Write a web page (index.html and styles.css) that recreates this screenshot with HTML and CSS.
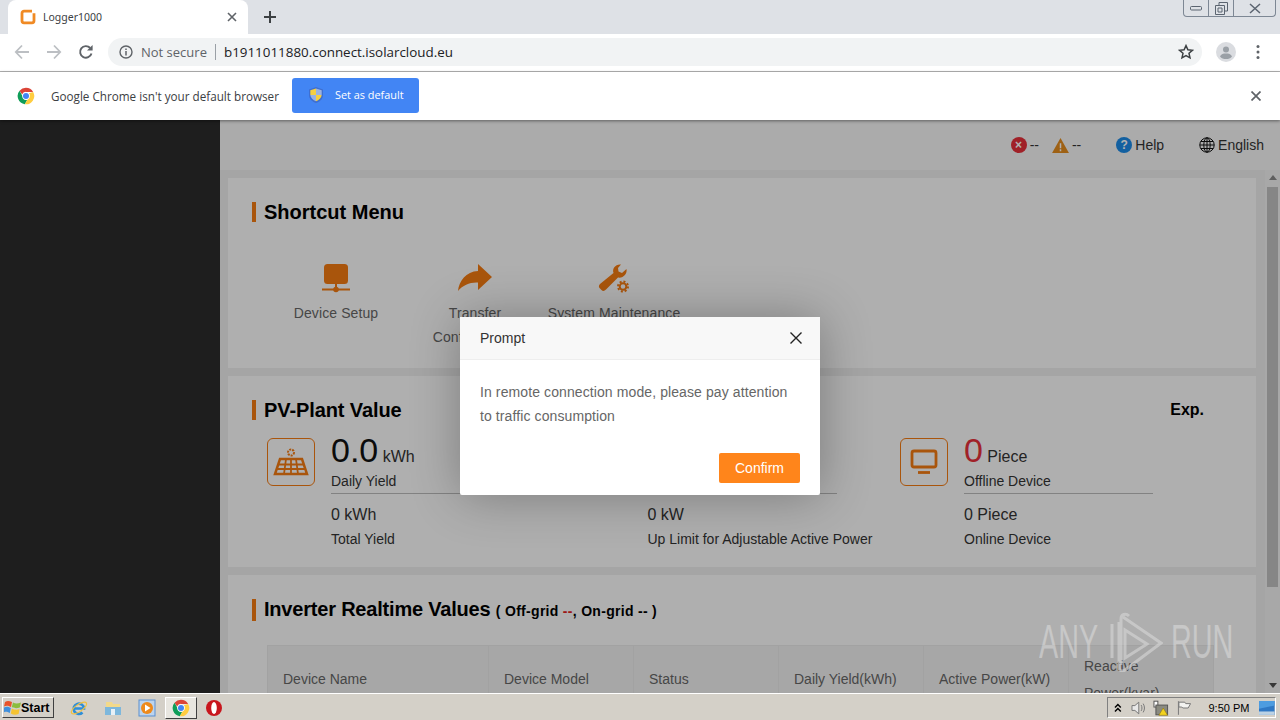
FILE: index.html
```html
<!DOCTYPE html>
<html lang="en">
<head>
    <meta charset="UTF-8">
    <meta name="viewport" content="width=device-width, initial-scale=1.0">
    <title>Logger1000</title>
    <link rel="stylesheet" href="styles.css">
</head>
<body>
    <svg class="defs" width="0" height="0">
        <symbol id="chrome-logo" viewBox="0 0 24 24">
            <path fill="#db4437" d="M12 1a11 11 0 0 1 9.5 5.5H12a5.5 5.5 0 0 0-5.2 3.6L3.4 5A11 11 0 0 1 12 1z"/>
            <path fill="#0f9d58" d="M3.4 5l4.2 7.6A5.5 5.5 0 0 0 13.500 17.300L10.400 22.900A11 11 0 0 1 3.400 5z"/>
            <path fill="#ffcd40" d="M21.500 6.500A11 11 0 0 1 10.400 22.900l4.300-7.500A5.500 5.500 0 0 0 15.800 8.200z"/>
            <circle cx="12" cy="12" r="5" fill="#fff"/>
            <circle cx="12" cy="12" r="4" fill="#4285f4"/>
        </symbol>
    </svg>

    <div class="tabstrip">
        <div class="tab">
            <svg class="favicon" viewBox="0 0 16 16"><path fill="none" stroke="#f08a24" stroke-width="2.800" d="M12 2.200H4A2 2 0 0 0 2 4.200v7.600a2 2 0 0 0 2 2h8a2 2 0 0 0 2-2V4.200"/></svg>
            <span class="tab-title">Logger1000</span>
            <svg class="tab-close" viewBox="0 0 10 10"><path stroke="#5f6368" stroke-width="1.600" d="M1 1l8 8M9 1l-8 8"/></svg>
        </div>
        <svg class="new-tab" viewBox="0 0 12 12"><path stroke="#3c4043" stroke-width="2" d="M6 0v12M0 6h12"/></svg>
        <div class="win-controls">
            <span class="win-btn"><svg width="12" height="6" viewBox="0 0 12 6"><rect x="0.500" y="1.500" width="11" height="3.500" rx="1" fill="none" stroke="#5b6470"/></svg></span>
            <span class="win-btn"><svg width="13" height="13" viewBox="0 0 13 13"><path fill="none" stroke="#5b6470" d="M4 3V.5h8.500V9H10M.5 3.500H9.500V12.500H.5zM3 6h4v4H3z"/></svg></span>
            <span class="win-btn win-close"><svg width="12" height="11" viewBox="0 0 12 11"><path fill="none" stroke="#5b6470" stroke-width="1.500" d="M1 1l10 9M11 1L1 10"/></svg></span>
        </div>
    </div>

    <div class="toolbar">
        <svg class="nav-icon" viewBox="0 0 16 16"><path fill="none" stroke="#bcbfc3" stroke-width="1.800" d="M15 8H2M8 1.500L1.800 8 8 14.500"/></svg>
        <svg class="nav-icon" viewBox="0 0 16 16"><path fill="none" stroke="#bcbfc3" stroke-width="1.800" d="M1 8h13M8 1.500L14.200 8 8 14.500"/></svg>
        <svg class="nav-icon" viewBox="0 0 16 16"><path fill="none" stroke="#5f6368" stroke-width="1.900" d="M13.500 9.500A5.800 5.800 0 1 1 12.200 4"/><path fill="#5f6368" d="M14.600 1v5.600H9z"/></svg>
        <div class="omnibox">
            <svg class="info-icon" viewBox="0 0 14 14"><circle cx="7" cy="7" r="6" fill="none" stroke="#5f6368" stroke-width="1.400"/><path stroke="#5f6368" stroke-width="1.500" d="M7 6v4.500M7 3.500v1.500"/></svg>
            <span class="not-secure">Not secure</span>
            <span class="omni-sep"></span>
            <span class="url">b1911011880.connect.isolarcloud.eu</span>
            <svg class="star" viewBox="0 0 16 16"><path fill="none" stroke="#3c4043" stroke-width="1.500" d="M8 1.600l1.900 4.200 4.500.5-3.400 3 1 4.500L8 11.500l-4 2.300 1-4.500-3.400-3 4.500-.5z"/></svg>
        </div>
        <svg class="avatar" viewBox="0 0 20 20"><circle cx="10" cy="10" r="10" fill="#dadce0"/><circle cx="10" cy="7.500" r="3" fill="#9aa0a6"/><path fill="#9aa0a6" d="M4 14.500c1-2.500 3.500-3 6-3s5 .5 6 3c-1.500 2-3.500 2.500-6 2.500s-4.500-.5-6-2.500z"/></svg>
        <svg class="menu-dots" viewBox="0 0 4 16"><circle cx="2" cy="2.500" r="1.500" fill="#5f6368"/><circle cx="2" cy="8" r="1.500" fill="#5f6368"/><circle cx="2" cy="13.500" r="1.500" fill="#5f6368"/></svg>
    </div>

    <div class="infobar">
        <svg class="info-logo"><use href="#chrome-logo"/></svg>
        <span class="info-text">Google Chrome isn't your default browser</span>
        <button class="default-btn">
            <svg class="shield" viewBox="0 0 14 16"><path fill="#3f6fd0" d="M7 0l7 2.500V8c0 4-3 6.500-7 8-4-1.500-7-4-7-8V2.500z"/><path fill="#f6cf3f" d="M7 1.500V8H1.300V3.300zM7 8h5.700c-.3 3-2.700 5-5.700 6.300z"/><path fill="#e6e9ef" d="M7 1.500l5.700 1.800V8H7zM7 8v6.300C4 13 1.600 11 1.300 8z" opacity=".55"/></svg>
            <span class="default-label">Set as default</span>
        </button>
        <svg class="info-close" viewBox="0 0 10 10"><path stroke="#5f6368" stroke-width="1.700" d="M.5.500l9 9M9.500.500l-9 9"/></svg>
    </div>

    <div class="page">
        <aside class="sidebar"></aside>
        <div class="main">
            <header class="topbar">
                <span class="status"><span class="dot dot-red">×</span><span class="dash">--</span></span>
                <span class="status status-warn">
                    <svg class="warn-icon" viewBox="0 0 18 16"><path fill="#e38b1e" d="M9 0l9 16H0z"/><path stroke="#fff" stroke-width="1.600" d="M9 5.500v5.500M9 12v2"/></svg>
                    <span class="dash">--</span>
                </span>
                <span class="top-link link-help"><span class="dot dot-blue">?</span>Help</span>
                <span class="top-link">
                    <svg class="globe" viewBox="0 0 16 16"><g fill="none" stroke="#111" stroke-width="1"><circle cx="8" cy="8" r="7.200"/><ellipse cx="8" cy="8" rx="3.200" ry="7.200"/><path d="M8 .8v14.400M.8 8h14.400M1.800 4.500h12.400M1.800 11.500h12.400"/></g></svg>English
                </span>
            </header>
            <div class="content-wrap">
                <div class="content">
                    <section class="card card-shortcut">
                        <h2 class="card-title">Shortcut Menu</h2>
                        <div class="shortcuts">
                            <div class="shortcut shortcut-device">
                                <svg class="shortcut-icon" viewBox="0 0 30 30"><rect x="3" y="1" width="24" height="20" rx="3.500" fill="#f37a12"/><path stroke="#f37a12" stroke-width="2" d="M15 20v7M1 26.500h28"/><circle cx="15" cy="26.500" r="2.800" fill="#f37a12"/></svg>
                                <div>Device Setup</div>
                            </div>
                            <div class="shortcut shortcut-transfer">
                                <svg class="shortcut-icon icon-wide" viewBox="0 0 34 30"><path fill="#f37a12" d="M20 1l14 13-14 13v-7.500C12 19 5 22 0 28c1-10 8-19.500 20-20z"/></svg>
                                <div>Transfer Configuration</div>
                            </div>
                            <div class="shortcut shortcut-system">
                                <svg class="shortcut-icon" viewBox="0 0 32 30"><path fill="#f37a12" d="M22 1.500C17 1.500 14 6 15.500 10L2 21c-1.500 1.500-1.500 3 0 4.500L3.500 27c1.500 1.500 3 1 4.500-.5l12-12c5 1 9.500-3.500 8.500-8.500L24 10l-3.500-1.500L20 5l3-3.500z"/><circle cx="25" cy="23.500" r="3.300" fill="none" stroke="#f37a12" stroke-width="2"/><circle cx="25" cy="23.500" r="5" fill="none" stroke="#f37a12" stroke-width="2" stroke-dasharray="2 1.900"/></svg>
                                <div>System Maintenance</div>
                            </div>
                        </div>
                    </section>

                    <section class="card card-plant">
                        <div class="plant-head">
                            <h2 class="card-title">PV-Plant Value</h2>
                            <span class="exp">Exp.</span>
                        </div>
                        <div class="stats">
                            <div class="stat">
                                <div class="stat-icon">
                                    <svg width="36" height="30" viewBox="0 0 36 30"><g fill="none" stroke="#f37a12"><circle cx="18" cy="5.500" r="3" stroke-width="2" stroke-dasharray="2 1"/><path stroke-width="2.500" d="M7 12h22l5 15H2z"/><path stroke-width="1.800" d="M5 17.500h26M4 22h28M13 12l-2 15M23 12l2 15M18 12v15"/></g></svg>
                                </div>
                                <div class="stat-body">
                                    <div class="stat-main"><span class="big">0.0</span> kWh</div>
                                    <div class="stat-label">Daily Yield</div>
                                    <div class="stat-sub">0 kWh</div>
                                    <div class="stat-label">Total Yield</div>
                                </div>
                            </div>
                            <div class="stat">
                                <div class="stat-icon"></div>
                                <div class="stat-body">
                                    <div class="stat-main"><span class="big">0.0</span> kW</div>
                                    <div class="stat-label">Active Power</div>
                                    <div class="stat-sub">0 kW</div>
                                    <div class="stat-label">Up Limit for Adjustable Active Power</div>
                                </div>
                            </div>
                            <div class="stat">
                                <div class="stat-icon">
                                    <svg width="28" height="26" viewBox="0 0 28 26"><g fill="none" stroke="#f37a12"><rect x="2" y="2" width="24" height="16" rx="2" stroke-width="2.800"/><path stroke-width="2.800" d="M8 23.500h12"/></g></svg>
                                </div>
                                <div class="stat-body">
                                    <div class="stat-main"><span class="big big-red">0</span> Piece</div>
                                    <div class="stat-label">Offline Device</div>
                                    <div class="stat-sub">0 Piece</div>
                                    <div class="stat-label">Online Device</div>
                                </div>
                            </div>
                        </div>
                    </section>

                    <section class="card card-inverter">
                        <h2 class="card-title">Inverter Realtime Values <small class="title-note">( Off-grid <em>--</em>, On-grid -- )</small></h2>
                        <table class="device-table">
                            <tr>
                                <th class="col-name">Device Name</th>
                                <th>Device Model</th>
                                <th>Status</th>
                                <th>Daily Yield(kWh)</th>
                                <th>Active Power(kW)</th>
                                <th>Reactive Power(kvar)</th>
                            </tr>
                        </table>
                    </section>
                </div>
                <div class="scrollbar">
                    <span class="arrow-up"></span>
                    <span class="thumb"></span>
                    <span class="arrow-down"></span>
                </div>
            </div>
        </div>

        <div class="overlay"></div>
        <div class="modal">
            <div class="modal-head">
                <span>Prompt</span>
                <svg class="modal-close" viewBox="0 0 12 12"><path stroke="#222" stroke-width="1.400" d="M.5.500l11 11M11.500.500l-11 11"/></svg>
            </div>
            <div class="modal-body">In remote connection mode, please pay attention to traffic consumption</div>
            <div class="modal-foot"><button class="confirm-btn">Confirm</button></div>
        </div>

        <div class="watermark">
            <span class="wm-text">ANY</span>
            <svg class="wm-logo" viewBox="0 0 56 62"><g fill="none" stroke="#d8d8d8" stroke-width="3"><path d="M16 7l38 26-36 27c-3 2-6 1-6-3V12"/><path d="M22 6c-3-3-8-2-8 3v46"/><path d="M5 14v34"/><path d="M18 20l22 14-22 14z"/></g></svg>
            <span class="wm-text">RUN</span>
        </div>
    </div>

    <footer class="taskbar">
        <button class="start-btn">
            <svg width="17" height="15" viewBox="0 0 17 15"><path fill="#e8522a" d="M1 2c2-1.500 4-1.500 7 0l-1 5C4 5.500 2.500 5.500 0 6.500z"/><path fill="#8bbd3c" d="M9 2.500c2.500 1.200 4.500 1.200 8 0l-1.200 5c-3 1-5 1-8-.5z"/><path fill="#3f8fdc" d="M0 7.500c2.500-1 4-1 6.800.5l-1 5c-2.800-1.500-4.300-1.500-6.800-.5z"/><path fill="#f5c433" d="M7.800 8.500c3 1.500 5 1.500 7.800.5l-1 5c-3 1-5 1-7.800-.5z"/></svg>
            Start
        </button>
        <div class="quick-launch">
            <svg class="tb-icon" viewBox="0 0 18 18"><path fill="none" stroke="#2e8ed8" stroke-width="2.600" d="M4.500 9.500h9.500a5.200 5.200 0 1 0-1.500 4"/><ellipse cx="9" cy="9" rx="9" ry="3.500" fill="none" stroke="#f0c040" stroke-width="1.200" transform="rotate(-35 9 9)"/></svg>
            <svg class="tb-icon" viewBox="0 0 18 18"><path fill="#f2d98a" d="M2 3h6l1 2h7v4H2z"/><path fill="#7db7dc" d="M1 8h16v8H1z"/><path fill="#e8f0f6" d="M7 10h4v6H7z"/></svg>
            <svg class="tb-icon" viewBox="0 0 18 18"><rect x="1" y="1" width="16" height="16" fill="#bcd4ee" stroke="#5a8fd0"/><circle cx="9" cy="9" r="6" fill="#ee8a1c"/><path fill="#fff" d="M7 5.500L12.500 9 7 12.500z"/></svg>
            <span class="tb-active"><svg class="tb-icon"><use href="#chrome-logo"/></svg></span>
            <svg class="tb-icon" viewBox="0 0 18 18"><circle cx="9" cy="9" r="8" fill="#c8161d"/><ellipse cx="9" cy="9" rx="2.800" ry="6" fill="#fff"/></svg>
        </div>
        <div class="tray">
            <svg class="tray-up" viewBox="0 0 8 10"><path fill="none" stroke="#000" stroke-width="1.500" d="M1 4.500L4 1.500l3 3M1 8.500l3-3 3 3"/></svg>
            <svg class="tray-icon" viewBox="0 0 16 16"><path fill="#e8e8e8" stroke="#777" d="M1 5.500h3L8 2v12L4 10.500H1z"/><path fill="none" stroke="#777" d="M10.500 5c1 2 1 4 0 6M12.500 3.500c1.800 3 1.800 6 0 9"/></svg>
            <svg class="tray-icon" viewBox="0 0 16 16"><rect x="1" y="1" width="4" height="6" fill="#fff" stroke="#555"/><rect x="3" y="5" width="12" height="10" fill="#8a8a80" stroke="#555"/><path fill="#f2d21e" stroke="#8a6d00" stroke-width=".5" d="M10.500 8l4.500 7.500H6z"/></svg>
            <svg class="tray-icon" viewBox="0 0 16 16"><path fill="none" stroke="#777" d="M2.500 1v14"/><path fill="#f3f3f0" stroke="#777" d="M3 2h6l1 1.500h5L12.500 8H7L6 7H3z"/></svg>
            <span class="clock">9:50 PM</span>
            <svg class="show-desktop" viewBox="0 0 18 16"><rect width="18" height="16" fill="#2f78c4"/><rect y="12" width="18" height="4" fill="#bcd2e4"/><path fill="#4d9ce0" d="M0 0h18v5L0 9z"/></svg>
        </div>
    </footer>
</body>
</html>
```

FILE: styles.css
```css
* {
    box-sizing: border-box;
}
html, body {
    margin: 0;
    height: 720px;
    overflow: hidden;
}
body {
    display: flex;
    flex-direction: column;
    width: 1280px;
    font-family: "Liberation Sans", Arial, sans-serif;
    font-size: 14px;
    background-color: #fff;
}
.defs {
    position: absolute;
}

/* browser chrome */
.tabstrip {
    display: flex;
    align-items: center;
    height: 34px;
    flex: none;
    background-color: #dee1e6;
}
.tab {
    display: flex;
    align-items: center;
    width: 240px;
    height: 34px;
    margin-left: 8px;
    padding: 0 11px 0 12px;
    background-color: #fff;
    border-radius: 8px 8px 0 0;
}
.favicon {
    width: 16px;
    height: 16px;
    margin-right: 7px;
}
.tab-title {
    flex: 1;
    padding-bottom: 1px;
    font-family: "Noto Sans", sans-serif;
    font-size: 10.500px;
    color: #3c4043;
}
.tab-close {
    width: 10px;
    height: 10px;
}
.new-tab {
    width: 12px;
    height: 12px;
    margin-left: 16px;
}
.win-controls {
    display: flex;
    align-self: flex-start;
    height: 17px;
    margin-left: auto;
    margin-right: 4px;
    border: 1px solid #7d8794;
    border-top: none;
    border-radius: 0 0 4px 4px;
}
.win-btn {
    display: flex;
    align-items: center;
    justify-content: center;
    width: 25px;
    border-right: 1px solid #7d8794;
}
.win-close {
    width: 41px;
    border-right: none;
}
.toolbar {
    display: flex;
    align-items: center;
    height: 38px;
    flex: none;
    padding-left: 14px;
    padding-bottom: 1px;
    background-color: #fff;
    border-bottom: 1px solid #b4b4b4;
}
.nav-icon {
    width: 16px;
    height: 16px;
    margin-right: 16px;
}
.omnibox {
    display: flex;
    align-items: center;
    width: 1094px;
    height: 28px;
    margin-left: -2px;
    padding: 0 8px 0 11px;
    background-color: #f1f3f4;
    border-radius: 14px;
    font-family: "Open Sans", sans-serif;
}
.info-icon {
    width: 14px;
    height: 14px;
    margin-right: 8px;
}
.not-secure {
    font-size: 13px;
    color: #5f6368;
}
.omni-sep {
    width: 1px;
    height: 16px;
    margin: 0 8px;
    background-color: #9aa0a6;
}
.url {
    flex: 1;
    font-size: 13.400px;
    color: #202124;
}
.star {
    width: 16px;
    height: 16px;
}
.avatar {
    width: 20px;
    height: 20px;
    margin-left: 14px;
}
.menu-dots {
    width: 4px;
    height: 16px;
    margin-left: 20px;
}
.infobar {
    display: flex;
    align-items: center;
    height: 48px;
    flex: none;
    padding-left: 17px;
    background-color: #fff;
    position: relative;
    z-index: 5;
    box-shadow: 0 1px 3px rgba(0, 0, 0, .45);
}
.info-logo {
    width: 18px;
    height: 18px;
    margin-right: 16px;
}
.info-text {
    font-family: "Open Sans", sans-serif;
    font-size: 11.700px;
    color: #3c4043;
}
.default-btn {
    display: flex;
    align-items: center;
    width: 127px;
    height: 35px;
    margin: 0 0 2px 13px;
    padding: 0 0 0 17px;
    background-color: #4285f4;
    border: none;
    border-radius: 3px;
    color: #fff;
    font-family: "Open Sans", sans-serif;
    font-size: 10.900px;
}
.default-label {
    padding-bottom: 2px;
}
.shield {
    width: 14px;
    height: 16px;
    margin-right: 12px;
}
.info-close {
    width: 10px;
    height: 10px;
    margin-left: auto;
    margin-right: 19px;
}

/* logger page */
.page {
    display: flex;
    flex: 1;
    min-height: 0;
    position: relative;
    overflow: hidden;
    color: #333;
}
.sidebar {
    width: 220px;
    flex: none;
    background-color: #2c2c2c;
}
.main {
    display: flex;
    flex-direction: column;
    flex: 1;
    min-width: 0;
    background-color: #ececec;
}
.topbar {
    display: flex;
    align-items: center;
    justify-content: flex-end;
    height: 50px;
    flex: none;
    padding-right: 16px;
    background-color: #f5f5f5;
    color: #333;
}
.status {
    display: flex;
    align-items: center;
    margin-right: 13px;
}
.status-warn {
    margin-right: 35px;
}
.dash {
    margin-left: 3px;
}
.dot {
    display: inline-flex;
    align-items: center;
    justify-content: center;
    width: 16px;
    height: 16px;
    border-radius: 50%;
    color: #fff;
    font-size: 12px;
    font-weight: bold;
}
.dot-red {
    background-color: #e5303a;
}
.dot-blue {
    background-color: #1c8ae6;
    margin-right: 3px;
}
.warn-icon {
    width: 17px;
    height: 15px;
}
.top-link {
    display: flex;
    align-items: center;
    margin-left: 0;
}
.link-help {
    margin-right: 35px;
}
.globe {
    width: 16px;
    height: 16px;
    margin-right: 3px;
}
.content-wrap {
    display: flex;
    flex: 1;
    min-height: 0;
}
.content {
    flex: 1;
    min-width: 0;
    padding: 8px 9px 0 8px;
    overflow: hidden;
}
.card {
    margin-bottom: 8px;
    padding: 0 24px;
    background-color: #fbfbfb;
}
.card-shortcut {
    height: 190px;
    padding-top: 24px;
}
.card-plant {
    height: 191px;
    padding-top: 24px;
}
.card-inverter {
    height: 300px;
    margin-bottom: 0;
    padding-top: 24px;
}
.card-title {
    margin: 0;
    padding-left: 8px;
    border-left: 4px solid #f37a12;
    font-size: 20px;
    line-height: 20px;
    font-weight: bold;
    color: #000;
}
.card-plant .card-title {
    letter-spacing: -.1px;
}
.card-inverter .card-title {
    letter-spacing: -.2px;
}
.title-note {
    font-size: 14px;
    letter-spacing: .3px;
}
.title-note em {
    font-style: normal;
    color: #e02020;
}
.shortcuts {
    display: flex;
    margin-top: 41px;
    text-align: center;
    color: #666;
    line-height: 24px;
    letter-spacing: .1px;
}
.shortcut-icon {
    display: block;
    width: 32px;
    height: 30px;
    margin: 0 auto 8px;
}
.icon-wide {
    width: 34px;
}
.shortcut-device {
    width: 168px;
}
.shortcut-transfer {
    width: 86px;
    margin-left: 12px;
}
.shortcut-system {
    width: 140px;
    margin-left: 26px;
    white-space: nowrap;
}
.plant-head {
    display: flex;
    justify-content: space-between;
    padding-right: 28px;
}
.exp {
    margin-top: 1px;
    font-size: 16px;
    font-weight: bold;
    color: #000;
}
.stats {
    display: flex;
    margin-top: 18px;
    padding-left: 15px;
}
.stat {
    display: flex;
    width: 316.500px;
}
.stat-icon {
    display: flex;
    align-items: center;
    justify-content: center;
    width: 48px;
    height: 48px;
    flex: none;
    border: 1px solid #f37a12;
    border-radius: 6px;
}
.stat-body {
    width: 189px;
    margin-left: 16px;
    color: #333;
    white-space: nowrap;
}
.stat-main {
    height: 30px;
    font-size: 16px;
    line-height: 24px;
}
.big {
    font-size: 34px;
    color: #111;
}
.big-red {
    color: #e5303a;
}
.stat-label {
    line-height: 24px;
    margin-top: 1px;
}
.stat-sub {
    padding: 10px 0 0;
    border-top: 1px solid #bbb;
    font-size: 16px;
    line-height: 22px;
}
.device-table {
    width: 947px;
    margin: 24px 0 0 15px;
    border-collapse: collapse;
    table-layout: fixed;
    background-color: #f0f0f0;
}
.device-table th {
    height: 68px;
    padding: 0 15px;
    border: 1px solid #e8e8e8;
    font-weight: normal;
    text-align: left;
    color: #666;
    line-height: 27px;
}
.device-table .col-name {
    width: 221px;
}
.scrollbar {
    display: flex;
    flex-direction: column;
    align-items: center;
    width: 15px;
    flex: none;
    padding: 5px 0;
    background-color: #f1f1f1;
}
.arrow-up, .arrow-down {
    width: 0;
    height: 0;
    border-left: 4px solid transparent;
    border-right: 4px solid transparent;
}
.arrow-up {
    border-bottom: 5px solid #888;
}
.arrow-down {
    margin-top: auto;
    border-top: 5px solid #505050;
}
.thumb {
    width: 11px;
    height: 400px;
    margin-top: 7px;
    background-color: #c1c1c1;
}

/* prompt */
.overlay {
    position: absolute;
    inset: 0;
    background-color: rgba(0, 0, 0, .3);
}
.modal {
    position: absolute;
    left: 460px;
    top: 197px;
    width: 360px;
    height: 178px;
    background-color: #fff;
    border-radius: 2px;
    box-shadow: 1px 1px 50px rgba(0, 0, 0, .3);
}
.modal-head {
    display: flex;
    align-items: center;
    justify-content: space-between;
    height: 43px;
    padding: 0 18px 0 20px;
    background-color: #f8f8f8;
    border-bottom: 1px solid #eee;
    color: #333;
}
.modal-close {
    width: 12px;
    height: 12px;
}
.modal-body {
    padding: 20px 20px 0;
    color: #666;
    line-height: 24px;
    letter-spacing: .1px;
}
.modal-foot {
    display: flex;
    justify-content: flex-end;
    margin-top: 25px;
    padding-right: 20px;
}
.confirm-btn {
    width: 81px;
    height: 30px;
    padding: 0;
    background-color: #ff851b;
    border: none;
    border-radius: 2px;
    color: #fff;
    font: 14px "Liberation Sans", Arial, sans-serif;
}
.watermark {
    position: absolute;
    left: 1039px;
    top: 490px;
    display: flex;
    align-items: center;
    gap: 8px;
    font-size: 48px;
    color: rgba(225, 225, 225, .5);
    pointer-events: none;
}
.wm-text {
    width: 60px;
    white-space: nowrap;
    transform: scaleX(.6);
    transform-origin: left center;
}
.wm-logo {
    width: 56px;
    height: 62px;
    opacity: .6;
}

/* windows taskbar */
.taskbar {
    display: flex;
    align-items: center;
    height: 27px;
    flex: none;
    padding: 1px 4px 0 2px;
    background-color: #d4d0c8;
    border-top: 1px solid #fff;
    position: relative;
    z-index: 5;
}
.start-btn {
    display: flex;
    align-items: center;
    gap: 0;
    width: 52px;
    height: 21px;
    padding: 0 0 0 1px;
    background-color: #d4d0c8;
    border: 1px solid;
    border-color: #fff #404040 #404040 #fff;
    font: bold 12.500px "Liberation Sans", sans-serif;
    color: #000;
}
.quick-launch {
    display: flex;
    align-items: center;
    gap: 16px;
    margin-left: 16px;
}
.tb-icon {
    display: block;
    width: 18px;
    height: 18px;
}
.tb-active {
    display: flex;
    align-items: center;
    justify-content: center;
    width: 32px;
    height: 22px;
    margin: 0 -8px 0 -7px;
    background-color: #e8e6e0;
    border: 1px solid;
    border-color: #fff #404040 #404040 #fff;
}
.tray {
    display: flex;
    align-items: center;
    width: 169px;
    height: 21px;
    margin-left: auto;
    padding-left: 4px;
    border: 1px solid;
    border-color: #808080 #fff #fff #808080;
}
.tray-up {
    width: 8px;
    height: 10px;
    margin: 0 2px;
}
.tray-icon {
    width: 16px;
    height: 16px;
    margin-left: 7px;
}
.clock {
    margin-left: 17px;
    font-family: "Liberation Sans", sans-serif;
    font-size: 11px;
    white-space: nowrap;
    color: #000;
}
.show-desktop {
    width: 16px;
    height: 14px;
    margin-left: 10px;
}
```
